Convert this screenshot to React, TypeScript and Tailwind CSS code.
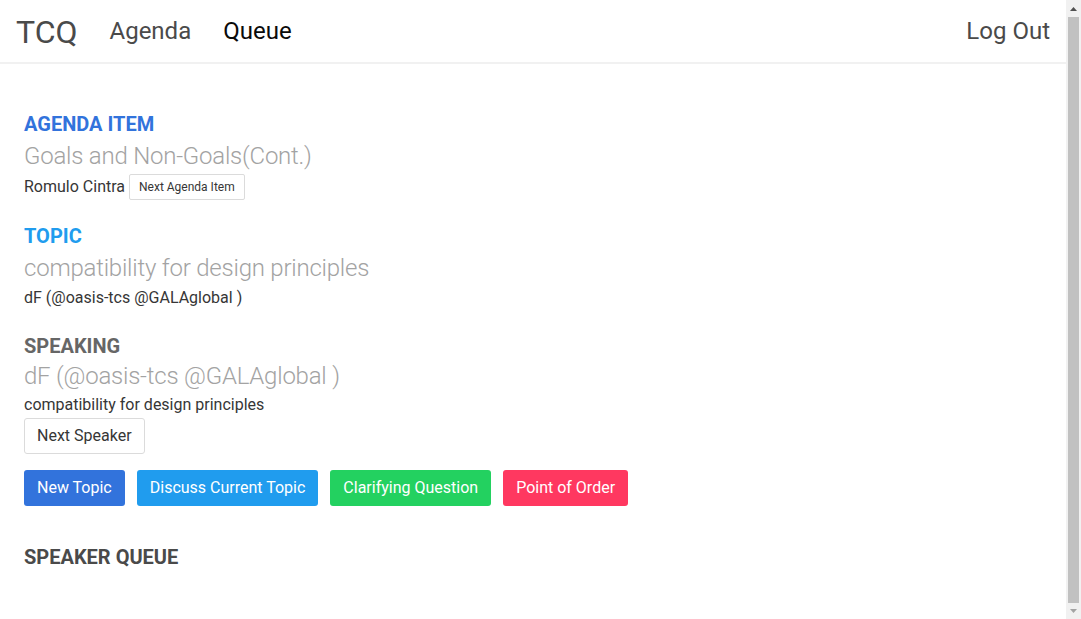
import React from "react";

const font = { fontFamily: "Roboto, 'Noto Sans', sans-serif" };
const light = { fontFamily: "'Roboto Light', Roboto, sans-serif" };

function Header() {
    return (
        <header className="flex items-center justify-between h-[64px] border-b-2 border-[#f1f1f1] px-4">
            <nav className="flex items-center">
                <span className="text-[32px] leading-[36px] text-[#4a4a4a] mt-[2px]">TCQ</span>
                <span className="ml-8 text-2xl text-[#4a4a4a]">Agenda</span>
                <span className="ml-8 text-2xl text-[#0a0a0a]">Queue</span>
            </nav>
            <span className="text-2xl text-[#4a4a4a]">Log Out</span>
        </header>
    );
}

function Section({ label, color, title, children }: { label: string; color: string; title: string; children: React.ReactNode }) {
    return (
        <section className="mb-[23px]">
            <h2 className={`text-xl leading-[27px] font-bold ${color}`}>{label}</h2>
            <p className="text-2xl leading-9 font-light tracking-[-0.22px] text-[#a3a3a3]" style={light}>{title}</p>
            {children}
        </section>
    );
}

// fake browser scrollbar, the page is a few px taller than the window
function Scrollbar() {
    return (
        <div className="w-[15px] h-[619px] shrink-0 flex flex-col items-center bg-[#f1f1f1]">
            <div className="h-[17px] flex items-center justify-center">
                <svg width="7" height="4" viewBox="0 0 7 4"><path d="M3.5 0L7 4H0z" fill="#505050" /></svg>
            </div>
            <div className="flex-1 w-[11px] bg-[#c1c1c1]" />
            <div className="h-[16px] flex items-center justify-center">
                <svg width="7" height="4" viewBox="0 0 7 4"><path d="M0 0h7L3.5 4z" fill="#a3a3a3" /></svg>
            </div>
        </div>
    );
}

const colorButtons = [
    { label: "New Topic", cls: "bg-[#3273dc]" },
    { label: "Discuss Current Topic", cls: "bg-[#209cee]" },
    { label: "Clarifying Question", cls: "bg-[#23d160]" },
    { label: "Point of Order", cls: "bg-[#ff3860]" },
];

export default function App() {
    return (
        <div className="flex h-[619px] overflow-hidden bg-white" style={font}>
            <div className="flex-1 min-w-0">
                <Header />
                <main className="px-6 pt-[47px]">
                    <Section label="AGENDA ITEM" color="text-[#3273dc]" title="Goals and Non-Goals(Cont.)">
                        <div className="flex items-center h-[26px] text-base text-[#363636]">
                            <span>Romulo Cintra</span>
                            <button className="ml-1 h-[26px] px-[9px] text-xs text-[#363636] border border-[#dbdbdb] rounded-[2px] bg-white">
                                Next Agenda Item
                            </button>
                        </div>
                    </Section>
                    <Section label="TOPIC" color="text-[#209cee]" title="compatibility for design principles">
                        <p className="text-base leading-6 text-[#363636]">dF (@oasis-tcs @GALAglobal )</p>
                    </Section>
                    <section>
                        <h2 className="text-xl leading-[27px] font-bold text-[#666]">SPEAKING</h2>
                        <p className="text-2xl leading-[33px] font-light tracking-[-0.22px] text-[#a3a3a3]" style={light}>dF (@oasis-tcs @GALAglobal )</p>
                        <p className="text-base leading-6 text-[#363636]">compatibility for design principles</p>
                        <button className="mt-[1px] h-9 px-3 text-base text-[#363636] border border-[#dbdbdb] rounded-[3px] bg-white">
                            Next Speaker
                        </button>
                    </section>
                    <div className="flex gap-3 mt-4">
                        {colorButtons.map((b) => (
                            <button key={b.label} className={`h-9 px-[13px] text-base text-white rounded-[3px] ${b.cls}`}>
                                {b.label}
                            </button>
                        ))}
                    </div>
                    <h2 className="mt-[38px] text-xl leading-[27px] font-bold text-[#4a4a4a]">SPEAKER QUEUE</h2>
                </main>
            </div>
            <Scrollbar />
        </div>
    );
}
